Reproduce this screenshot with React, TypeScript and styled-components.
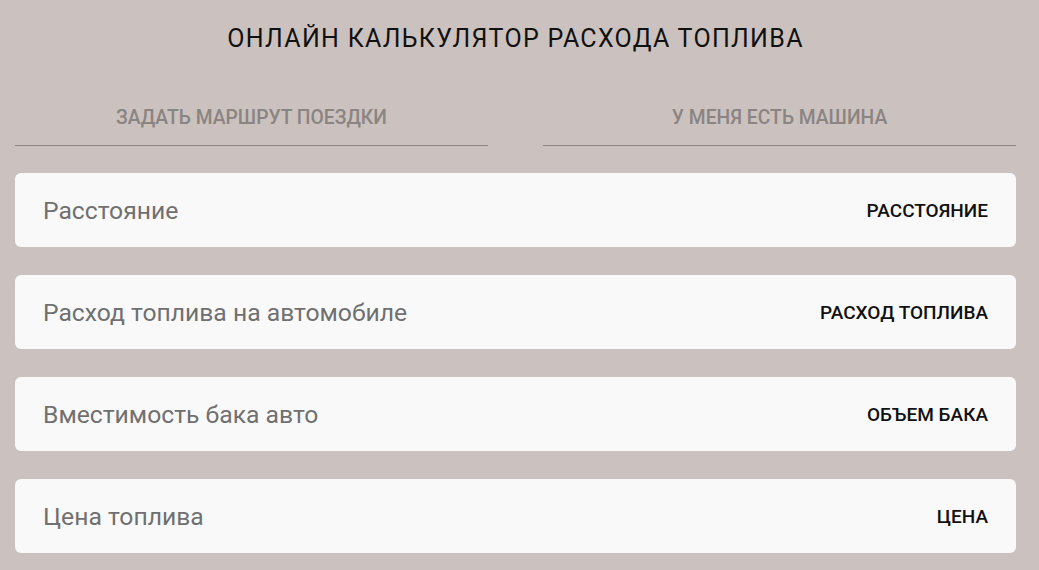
import React from "react";
import styled, { createGlobalStyle } from "styled-components";

const GlobalStyle = createGlobalStyle`
    html, body {
        margin: 0;
        padding: 0;
        background: #cbc2bf;
        font-family: Roboto, "Liberation Sans", sans-serif;
    }
`;

const Page = styled.div`
    width: 1001px;
    margin-left: 15px;
    padding-top: 23px;
`;

const Title = styled.h1`
    margin: 0;
    text-align: center;
    font-size: 25px;
    font-weight: 400;
    letter-spacing: 1.3px;
    color: #111;
    line-height: 32px;
`;

const Tabs = styled.div`
    display: grid;
    grid-template-columns: 1fr 1fr;
    column-gap: 55px;
    margin-top: 52px;
`;

const Tab = styled.div<{ active?: boolean }>`
    text-align: center;
    font-size: 19.3px;
    font-weight: 500;
    color: ${({ active }) => (active ? "#222" : "#8a8482")};
    line-height: 22px;
    padding-bottom: 16px;
    border-bottom: 1px solid #8f8786;
`;

const Fields = styled.div`
    display: flex;
    flex-direction: column;
    gap: 28px;
    margin-top: 27px;
`;

const Field = styled.div`
    display: flex;
    align-items: center;
    justify-content: space-between;
    height: 74px;
    padding: 0 28px;
    background: #f9f9f9;
    border-radius: 6px;
`;

const Label = styled.span`
    font-size: 24.7px;
    color: #707070;
`;

const Unit = styled.span`
    font-size: 19px;
    font-weight: 500;
    color: #111;
`;

const fields = [
    { label: "Расстояние", unit: "РАССТОЯНИЕ" },
    { label: "Расход топлива на автомобиле", unit: "РАСХОД ТОПЛИВА" },
    { label: "Вместимость бака авто", unit: "ОБЪЕМ БАКА" },
    { label: "Цена топлива", unit: "ЦЕНА" },
];

export default function App() {
    return (
        <>
            <GlobalStyle />
            <Page>
                <Title>ОНЛАЙН КАЛЬКУЛЯТОР РАСХОДА ТОПЛИВА</Title>
                <Tabs>
                    <Tab>ЗАДАТЬ МАРШРУТ ПОЕЗДКИ</Tab>
                    <Tab>У МЕНЯ ЕСТЬ МАШИНА</Tab>
                </Tabs>
                <Fields>
                    {fields.map((f) => (
                        <Field key={f.unit}>
                            <Label>{f.label}</Label>
                            <Unit>{f.unit}</Unit>
                        </Field>
                    ))}
                </Fields>
            </Page>
        </>
    );
}
